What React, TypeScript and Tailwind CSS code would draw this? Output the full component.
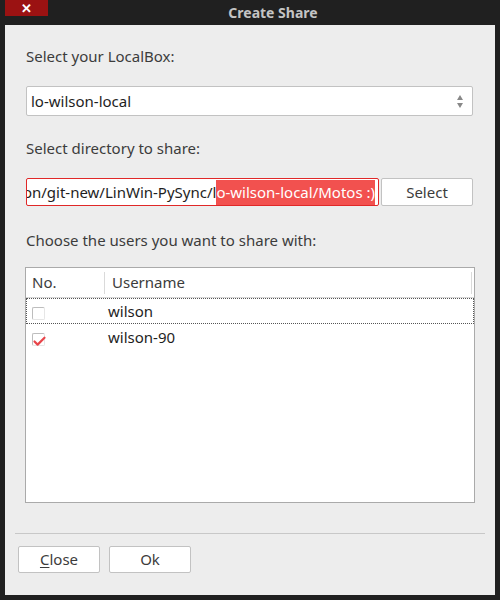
import { Check } from 'lucide-react';

const USERS = [
  { name: 'wilson', checked: false, focused: true },
  { name: 'wilson-90', checked: true, focused: false },
];

function Checkbox({ checked }: { checked: boolean }) {
  return (
    <div className="relative w-[13px] h-[13px] border border-t-[#bdbdbd] border-l-[#bdbdbd] border-r-[#e6e6e6] border-b-[#e6e6e6] rounded-[2px] bg-white">
      {checked && (
        <Check
          size={15}
          strokeWidth={3.5}
          className="absolute -left-[1px] top-[0px] text-[#e8454a]"
        />
      )}
    </div>
  );
}

export default function App() {
  return (
    <div className="w-[500px] h-[600px] bg-[#202020] flex flex-col font-['Noto_Sans',sans-serif]">
      {/* title bar */}
      <div className="h-[25px] flex items-start">
        <div className="ml-[5px] w-[43px] h-[16px] bg-[#9b1212] flex items-center justify-center text-white text-[13px] font-bold leading-none">
          ✕
        </div>
        <div className="flex-1 h-[24px] flex items-center justify-center text-[14px] font-bold text-[#c4c4c4] pr-[2px]">
          Create Share
        </div>
      </div>

      <div className="mx-[5px] h-[570px] bg-[#ededed] flex flex-col text-[15px] text-[#3c3c3c]">
        <div className="px-[21px] flex flex-col">
          <div className="mt-[20px] h-[22px] flex items-center">Select your LocalBox:</div>

          <div className="mt-[19px] h-[30px] bg-white border border-[#c2c2c2] rounded-[2px] flex items-center justify-between pl-[4px] pr-[9px] w-[447px]">
            <span className="text-[#1e1e1e]">lo-wilson-local</span>
            <div className="flex flex-col items-center gap-[3px]">
              <div className="w-0 h-0 border-l-[3px] border-r-[3px] border-b-[5px] border-l-transparent border-r-transparent border-b-[#888]" />
              <div className="w-0 h-0 border-l-[3px] border-r-[3px] border-t-[5px] border-l-transparent border-r-transparent border-t-[#888]" />
            </div>
          </div>

          <div className="mt-[21px] h-[22px] flex items-center">Select directory to share:</div>

          <div className="mt-[19px] flex gap-[2px]">
            <div className="w-[353px] h-[28px] border border-[#e02828] rounded-[2px] bg-white overflow-hidden flex items-center justify-end pr-[3px] pt-[1px]">
              <span className="whitespace-nowrap text-[#1e1e1e] flex items-center">
                <span>/home/wilson/git-new/LinWin-PySync/l</span>
                <span className="bg-[#f2514f] text-white py-[1px]">o-wilson-local/Motos :)</span>
              </span>
            </div>
            <div className="w-[92px] h-[28px] bg-white border border-[#c2c2c2] rounded-[2px] flex items-center justify-center text-[#3c3c3c]">
              Select
            </div>
          </div>

          <div className="mt-[23px] h-[22px] flex items-center">Choose the users you want to share with:</div>
        </div>

        {/* table */}
        <div className="mt-[16px] ml-[20px] w-[450px] h-[236px] bg-white border border-[#aaaaaa] flex flex-col">
          <div className="h-[30px] flex items-center border-b border-[#d6d6d6]">
            <div className="w-[79px] pl-[6px] h-[22px] flex items-center border-r border-[#dadada]">No.</div>
            <div className="flex-1 pl-[7px] h-[22px] flex items-center border-r border-[#dadada] mr-[2px]">Username</div>
          </div>
          {USERS.map((u) => (
            <div
              key={u.name}
              className={`h-[26px] flex items-center text-[#1e1e1e] ${
                u.focused ? 'border border-dotted border-[#555]' : 'border border-transparent'
              }`}
            >
              <div className="w-[81px] pl-[5px] pt-[4px] flex items-center">
                <Checkbox checked={u.checked} />
              </div>
              <div className="flex-1">{u.name}</div>
            </div>
          ))}
        </div>

        <div className="mt-[30px] mx-[10px] h-px bg-[#c8c8c8]" />

        <div className="mt-[12px] ml-[13px] flex gap-[9px]">
          <div className="w-[82px] h-[27px] bg-white border border-[#c2c2c2] rounded-[2px] flex items-center justify-center">
            <span>
              <span className="underline underline-offset-2">C</span>lose
            </span>
          </div>
          <div className="w-[82px] h-[27px] bg-white border border-[#c2c2c2] rounded-[2px] flex items-center justify-center">
            Ok
          </div>
        </div>
      </div>
    </div>
  );
}
